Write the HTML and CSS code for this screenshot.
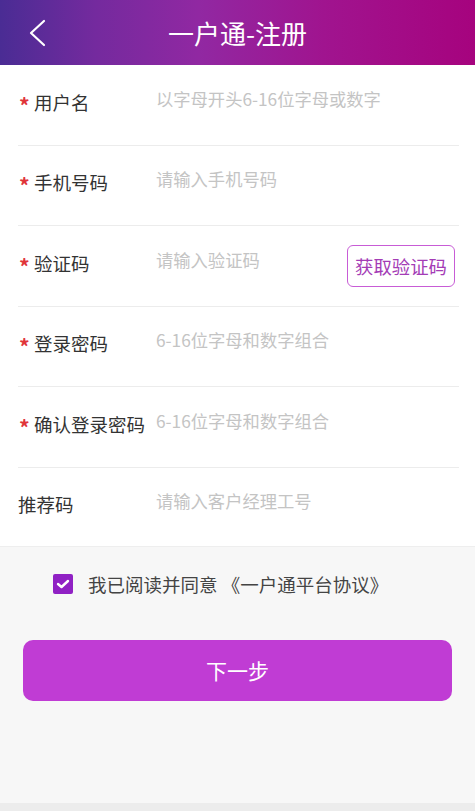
FILE: index.html
```html
<!DOCTYPE html>
<html lang="zh-CN">
<head>
    <meta charset="UTF-8">
    <meta name="viewport" content="width=device-width, initial-scale=1.0">
    <title>一户通-注册</title>
    <link rel="stylesheet" href="styles.css">
</head>
<body>
    <div class="page">
        <div class="top-bar">
            <a class="back-btn">
                <svg width="20" height="30" viewBox="0 0 20 30">
                    <path d="M16 3 L3 15 L16 27" fill="none" stroke="#fff" stroke-width="2.2" stroke-linecap="round" stroke-linejoin="round"/>
                </svg>
            </a>
            <div class="top-title">一户通-注册</div>
        </div>

        <div class="form">
            <div class="form-row">
                <div class="label"><span class="star">*</span>用户名</div>
                <input type="text" placeholder="以字母开头6-16位字母或数字">
            </div>
            <div class="form-row">
                <div class="label"><span class="star">*</span>手机号码</div>
                <input type="text" placeholder="请输入手机号码">
            </div>
            <div class="form-row">
                <div class="label"><span class="star">*</span>验证码</div>
                <input type="text" placeholder="请输入验证码">
                <button class="code-btn">获取验证码</button>
            </div>
            <div class="form-row">
                <div class="label"><span class="star">*</span>登录密码</div>
                <input type="password" placeholder="6-16位字母和数字组合">
            </div>
            <div class="form-row">
                <div class="label"><span class="star">*</span>确认登录密码</div>
                <input type="password" placeholder="6-16位字母和数字组合">
            </div>
            <div class="form-row last">
                <div class="label">推荐码</div>
                <input type="text" placeholder="请输入客户经理工号">
            </div>
        </div>

        <div class="bottom">
            <div class="agree">
                <span class="check">
                    <svg width="14" height="12" viewBox="0 0 14 12">
                        <path d="M2 6 L5.5 9 L12 3" fill="none" stroke="#fff" stroke-width="2.4" stroke-linecap="round" stroke-linejoin="round"/>
                    </svg>
                </span>
                <span>我已阅读并同意 《一户通平台协议》</span>
            </div>
            <button class="next-btn">下一步</button>
        </div>
        <div class="foot-bar"></div>
    </div>
</body>
</html>
```

FILE: styles.css
```css
* {
    margin: 0;
    padding: 0;
    box-sizing: border-box;
    font-family: 'Noto Sans CJK SC', 'Noto Sans', sans-serif;
}

body {
    background: #f7f7f7;
    width: 475px;
    height: 811px;
    overflow: hidden;
}

.page {
    height: 811px;
    display: flex;
    flex-direction: column;
}

.top-bar {
    height: 65px;
    background: linear-gradient(90deg, #4a2c94 0%, #742a9e 20%, #9128a2 42%, #a0148f 68%, #a6037e 100%);
    display: flex;
    align-items: center;
    position: relative;
}

.back-btn {
    width: 20px;
    height: 30px;
    margin-left: 28px;
    display: flex;
}

.top-title {
    position: absolute;
    left: 0;
    right: 0;
    text-align: center;
    color: #fff;
    font-size: 26px;
    line-height: 65px;
    pointer-events: none;
}

.form {
    background: #fff;
    padding: 0 16px 0 18px;
}

.form-row {
    height: 80.5px;
    display: flex;
    align-items: center;
    border-bottom: 1px solid #ececec;
}

.form-row.last {
    border-bottom: none;
    height: 78px;
}

.label {
    width: 138px;
    font-size: 18.5px;
    color: #333;
    display: flex;
    align-items: center;
    margin-top: -6px;
}

.star {
    color: #e0343a;
    font-size: 21px;
    font-weight: bold;
    width: 15px;
    padding-top: 6px;
    text-align: left;
    margin-left: 1px;
}

.form-row input {
    flex: 1;
    min-width: 0;
    border: none;
    outline: none;
    font-size: 17.3px;
    color: #333;
    background: transparent;
    margin-top: -13px;
}

.form-row input::placeholder {
    color: #c4c4c4;
}

.code-btn {
    width: 108px;
    height: 42px;
    margin-right: 4px;
    border: 1px solid #c85cd6;
    border-radius: 6px;
    background: #fff;
    color: #a43cb6;
    font-size: 18.4px;
}

.bottom {
    flex: 1;
    border-top: 1px solid #eeeeee;
    padding: 0 23px;
}

.agree {
    display: flex;
    align-items: center;
    margin: 24px 0 0 30px;
    font-size: 18.5px;
    color: #444;
    gap: 15px;
}

.check {
    width: 20px;
    height: 20px;
    background: #9021c4;
    border-radius: 2px;
    display: flex;
    align-items: center;
    justify-content: center;
}

.next-btn {
    width: 100%;
    height: 61px;
    margin-top: 43px;
    border: none;
    border-radius: 10px;
    background: #c03cd4;
    color: #fff;
    font-size: 21px;
}

.foot-bar {
    height: 8px;
    background: #ececec;
}
```
